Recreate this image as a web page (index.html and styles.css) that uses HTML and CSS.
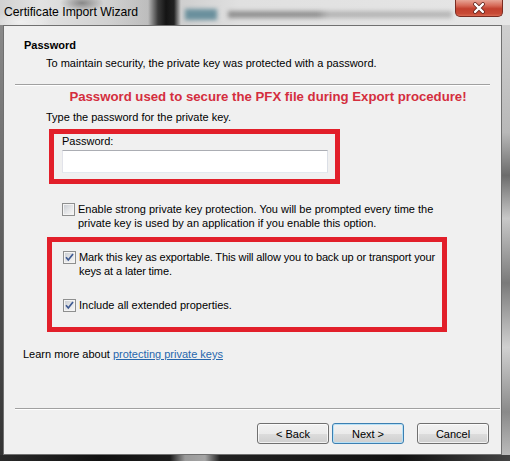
FILE: index.html
```html
<!DOCTYPE html>
<html lang="en">
<head>
<meta charset="utf-8">
<title>Certificate Import Wizard</title>
<link rel="stylesheet" href="styles.css">
</head>
<body>
<div class="screen">
  <div class="titlebar">
    <span class="title">Certificate Import Wizard</span>
    <span class="glass-icon"></span>
    <span class="glass-text"></span>
    <div class="close">
      <svg width="47" height="17" viewBox="0 0 47 17">
        <path d="M19.5 4 L27.5 12 M27.5 4 L19.5 12" stroke="#5a1f18" stroke-width="4" stroke-linecap="round"/>
        <path d="M19.5 4 L27.5 12 M27.5 4 L19.5 12" stroke="#ffffff" stroke-width="2.4" stroke-linecap="round"/>
      </svg>
    </div>
  </div>
  <div class="frame">
    <div class="edge-left"></div>
    <div class="client">
      <div class="header">
        <div class="h-title">Password</div>
        <div class="h-sub">To maintain security, the private key was protected with a password.</div>
      </div>
      <div class="sep sep-top"></div>
      <div class="content">
        <div class="notice">Password used to secure the PFX file during Export procedure!</div>
        <div class="prompt">Type the password for the private key.</div>
        <div class="redbox box-pass">
          <div class="label">Password:</div>
          <div class="input"></div>
        </div>
        <div class="check-row row-strong">
          <span class="cb"></span>
          <span class="cb-text">Enable strong private key protection. You will be prompted every time the<br>private key is used by an application if you enable this option.</span>
        </div>
        <div class="redbox box-opts">
          <div class="check-row">
            <span class="cb checked"><svg width="11" height="11" viewBox="0 0 11 11"><path d="M2 5.2 L4.3 8 L9 2" stroke="#3e5a92" stroke-width="1.7" fill="none"/></svg></span>
            <span class="cb-text tight">Mark this key as exportable. This will allow you to back up or transport your<br>keys at a later time.</span>
          </div>
          <div class="check-row row-ext">
            <span class="cb checked"><svg width="11" height="11" viewBox="0 0 11 11"><path d="M2 5.2 L4.3 8 L9 2" stroke="#3e5a92" stroke-width="1.7" fill="none"/></svg></span>
            <span class="cb-text">Include all extended properties.</span>
          </div>
        </div>
      </div>
      <div class="learn">Learn more about <a href="#" class="link">protecting private keys</a></div>
      <div class="footer">
        <div class="sep sep-bottom"></div>
        <div class="buttons">
          <button class="btn">&lt; Back</button>
          <button class="btn btn-default">Next &gt;</button>
          <button class="btn btn-cancel">Cancel</button>
        </div>
      </div>
    </div>
    <div class="edge-right"></div>
  </div>
  <div class="edge-bottom"></div>
</div>
</body>
</html>
```
FILE: styles.css
```css
* { box-sizing: border-box; }
body {
  margin: 0;
  background: #1a1a1a;
  font-family: "Liberation Sans", Arial, sans-serif;
  font-size: 11px;
  color: #000;
}
.screen {
  width: 510px;
  height: 461px;
  display: flex;
  flex-direction: column;
  overflow: hidden;
}

/* title bar */
.titlebar {
  height: 25px;
  flex: none;
  display: flex;
  align-items: flex-start;
  background:
    radial-gradient(ellipse 22px 9px at 82px 3px, rgba(70,70,70,.55), rgba(70,70,70,0)),
    radial-gradient(ellipse 30px 12px at 20px 22px, rgba(255,255,255,.6), rgba(255,255,255,0)),
    linear-gradient(to right, #d2d2d2 0, #e2e2e2 40px, #d0d0d0 110px, #bdbdbd 148px, #3a3a3a 158px, #141414 166px, #222 174px, #cfcfcf 181px, #e0e0e0 240px, #e6e6e6 510px);
}
.title {
  font-family: "Liberation Sans", Arial, sans-serif;
  font-size: 12.2px;
  line-height: 14px;
  margin: 5px 0 0 4px;
  color: #000;
  white-space: nowrap;
}
.glass-icon {
  width: 32px;
  height: 11px;
  margin: 9px 0 0 47px;
  background: #6a909d;
  filter: blur(2px);
  flex: none;
}
.glass-text {
  width: 224px;
  height: 7px;
  margin: 11px 0 0 11px;
  background: linear-gradient(to right, rgba(70,70,70,.5) 0, rgba(70,70,70,.5) 40%, rgba(100,100,100,.35) 45%, rgba(100,100,100,.35) 100%);
  filter: blur(2px);
  flex: none;
}
.close {
  margin-left: auto;
  margin-right: 7px;
  width: 48px;
  height: 17px;
  border: 1px solid #7a2c22;
  border-top: none;
  border-radius: 0 0 5px 5px;
  background: linear-gradient(#e7a596 0, #d66a58 35%, #c2402e 55%, #c84a36 85%, #d86a52 100%);
  display: flex;
}

/* frame */
.frame {
  height: 430px;
  flex: none;
  display: flex;
}
.edge-left {
  width: 3px;
  background: linear-gradient(#8a8a8a, #555 60%, #333);
}
.edge-right {
  width: 8px;
  background: linear-gradient(#cfcfcf 0, #b8b8b8 25%, #6c6c6c 35%, #c8c8c8 45%, #7a7a7a 60%, #d0d0d0 75%, #8a8a8a 90%, #bbb 100%);
}
.edge-bottom {
  flex: 1;
  background: linear-gradient(to right, #2a2a2a 0, #111 100px, #1c1c1c 170px, #9a9a9a 185px, #a5a5a5 205px, #222 220px, #111 400px, #444 510px);
}
.client {
  width: 499px;
  border: 1px solid #707070;
  background: #f0f0f0;
  display: flex;
  flex-direction: column;
}

/* header */
.header {
  padding: 12px 0 0 20px;
}
.h-title {
  font-weight: bold;
  line-height: 14px;
}
.h-sub {
  margin: 4px 0 0 22px;
  line-height: 14px;
}
.sep {
  border-top: 1px solid #a0a0a0;
  border-bottom: 1px solid #ffffff;
}
.sep-top {
  margin: 14px 11px 0 11px;
}

/* content */
.content {
  padding: 0 11px 0 42px;
}
.notice {
  margin-top: 3px;
  text-align: center;
  font-weight: bold;
  font-size: 13.2px;
  line-height: 16px;
  color: #d42e3e;
  white-space: nowrap;
}
.prompt {
  margin-top: 5px;
  line-height: 14px;
}
.redbox {
  border: 5px solid #e21f2a;
}
.box-pass {
  margin: 5px 0 0 3px;
  width: 291px;
  height: 55px;
  padding: 0 0 6px 8px;
}
.label {
  line-height: 14px;
}
.input {
  margin-top: 2px;
  width: 266px;
  height: 23px;
  background: #fff;
  border: 1px solid;
  border-color: #abadb3 #dbdfe6 #e3e9ef #e2e3ea;
}
.check-row {
  display: flex;
  align-items: flex-start;
  line-height: 14px;
}
.row-strong {
  margin: 18px 0 0 16px;
}
.cb {
  width: 13px;
  height: 13px;
  flex: none;
  margin-top: 1px;
  margin-right: 3px;
  border: 1px solid #8e8f8f;
  background: linear-gradient(135deg, #c6cad0 0, #e6e7e9 55%, #f8f8f8 100%);
  box-shadow: inset 0 0 0 1px #f4f4f4;
  display: flex;
  align-items: center;
  justify-content: center;
}
.cb svg {
  display: block;
}
.cb-text {
  white-space: nowrap;
}
.cb-text.tight {
  letter-spacing: -0.12px;
}
.box-opts {
  margin: 7px 0 0 1px;
  width: 400px;
  height: 95px;
  padding: 8px 0 0 11px;
}
.row-ext {
  margin-top: 20px;
}

/* learn more */
.learn {
  margin: 15px 0 0 19px;
  line-height: 14px;
}
.link {
  color: #2767ad;
  text-decoration: underline;
}

/* footer */
.footer {
  margin-top: auto;
  padding-bottom: 10px;
}
.sep-bottom {
  margin: 0 1px 0 11px;
}
.buttons {
  display: flex;
  justify-content: flex-end;
  padding-right: 12px;
  margin-top: 13px;
}
.btn {
  width: 72px;
  height: 21px;
  margin: 0;
  padding: 0;
  font-family: "Liberation Sans", Arial, sans-serif;
  font-size: 11px;
  color: #000;
  border: 1px solid #707070;
  border-radius: 3px;
  background: linear-gradient(#f2f2f2 0, #ebebeb 50%, #dddddd 51%, #cfcfcf 100%);
  box-shadow: inset 0 0 0 1px rgba(255,255,255,.7);
}
.btn-default {
  margin-left: 3px;
  border-color: #3c7fb1;
  box-shadow: inset 0 0 0 1px #b7e1f7;
}
.btn-cancel {
  margin-left: 13px;
}
```
